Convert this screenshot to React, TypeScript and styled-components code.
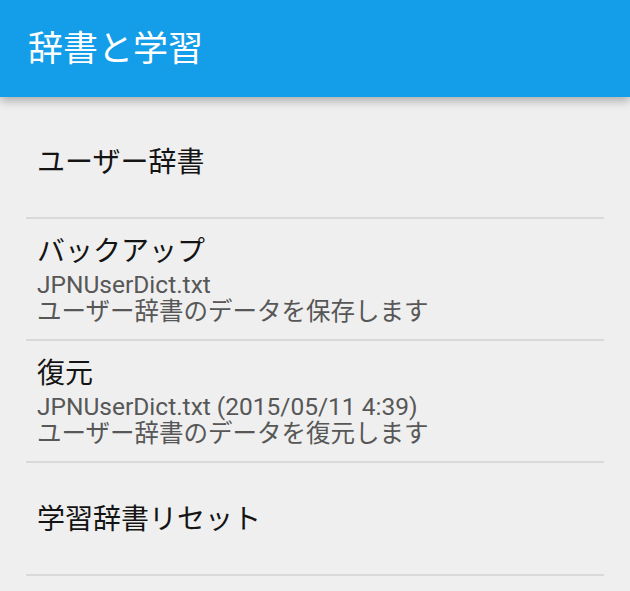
import React from 'react';
import styled, { createGlobalStyle } from 'styled-components';

const GlobalStyle = createGlobalStyle`
  html, body {
    margin: 0;
    padding: 0;
    background: #efefef;
  }
  body {
    font-family: Roboto, "Noto Sans CJK JP", sans-serif;
  }
`;

const Screen = styled.div`
  width: 630px;
  min-height: 591px;
  background: #efefef;
  overflow: hidden;
`;

const AppBar = styled.header`
  position: relative;
  z-index: 1;
  height: 97px;
  background: #149de8;
  box-shadow: 0 4px 9px rgba(0, 0, 0, 0.28);
  display: flex;
  align-items: center;
  padding-left: 28px;
`;

const AppTitle = styled.h1`
  margin: 0;
  color: #ffffff;
  font-size: 35px;
  font-weight: 400;
  line-height: 40px;
  padding-top: 3px;
`;

const List = styled.div`
  display: flex;
  flex-direction: column;
  padding-top: 9px;
`;

const Item = styled.div`
  min-height: 113px;
  box-sizing: border-box;
  padding: 16px 11px 14px;
  margin: 0 26px;
  border-bottom: 2px solid #d9d9d9;
  display: flex;
  flex-direction: column;
  justify-content: center;
`;

const Title = styled.div`
  color: #141414;
  font-size: 28px;
  line-height: 33px;
  & + div {
    margin-top: 3px;
  }
`;

const Summary = styled.div`
  color: #575757;
  font-size: 24.5px;
  line-height: 27px;
`;

const items = [
  { title: 'ユーザー辞書' },
  {
    title: 'バックアップ',
    lines: ['JPNUserDict.txt', 'ユーザー辞書のデータを保存します'],
  },
  {
    title: '復元',
    lines: ['JPNUserDict.txt (2015/05/11 4:39)', 'ユーザー辞書のデータを復元します'],
  },
  { title: '学習辞書リセット' },
];

export default function App() {
  return (
    <Screen>
      <GlobalStyle />
      <AppBar>
        <AppTitle>辞書と学習</AppTitle>
      </AppBar>
      <List>
        {items.map((item) => (
          <Item key={item.title}>
            <Title>{item.title}</Title>
            {item.lines?.map((line) => (
              <Summary key={line}>{line}</Summary>
            ))}
          </Item>
        ))}
      </List>
    </Screen>
  );
}
